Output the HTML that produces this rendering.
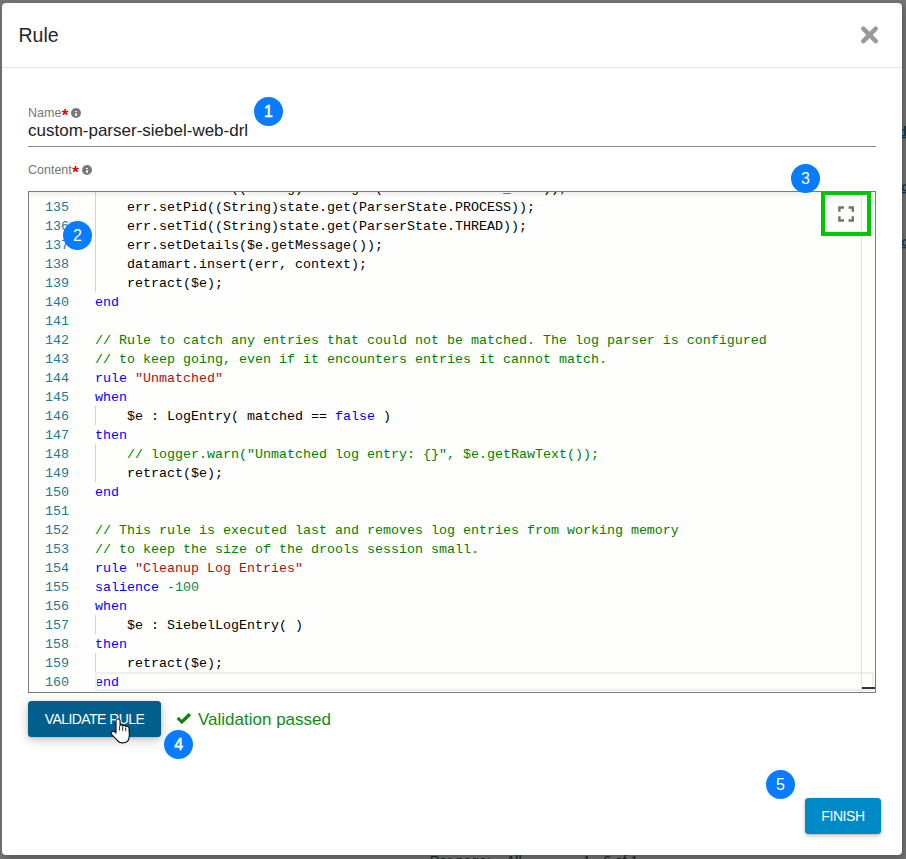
<!DOCTYPE html>
<html><head><meta charset="utf-8">
<style>
*{margin:0;padding:0;box-sizing:border-box}
html,body{width:906px;height:859px;overflow:hidden;background:#737373;font-family:"Liberation Sans",sans-serif}
.bgtxt{position:absolute;top:853px;font-size:14px;color:#222;white-space:pre}
.dlg{position:absolute;left:2px;top:3px;width:900px;height:852px;background:#fff;border-radius:4px;box-shadow:2px 3px 6px rgba(0,0,0,.25)}
.title{position:absolute;left:16.5px;top:19px;font-size:19.5px;color:#262626;line-height:26px}
.hsep{position:absolute;left:0;top:64px;width:900px;height:1px;background:#e3e3e3}
.close{position:absolute;left:0;top:0}
.lbl{position:absolute;font-size:12.5px;color:#777;line-height:14px;white-space:nowrap}
.lbl b{color:#e00;font-weight:bold;font-size:17px;vertical-align:-3.5px;margin-left:0.5px}
.info{position:absolute;width:10px;height:10px;border-radius:50%;background:#7a7a7a}
.info:before{content:"";position:absolute;left:4.3px;top:2.6px;width:1.5px;height:1.5px;background:#f4f4f4}
.info:after{content:"";position:absolute;left:4.2px;top:4.9px;width:1.6px;height:3px;background:#e6e6e6}
.val{position:absolute;left:26px;top:118px;font-size:17px;color:#222;line-height:20px;white-space:nowrap}
.uline{position:absolute;left:26px;top:143px;width:848px;height:1px;background:#8a8a8a}
.editor{position:absolute;left:26px;top:188px;width:848px;height:502px;border:1px solid #7a7a7a;background:#fefefd;overflow:hidden}
.code{position:absolute;left:0;top:1px;font-family:"Liberation Mono",monospace;font-size:13.333px;line-height:19px;white-space:pre;color:#000}
.ln{position:absolute;left:0;width:40px;text-align:right;color:#237893}
.tx{position:absolute;left:66px}
.k{color:#0000ff}.s{color:#a31515}.c{color:#008000}.n{color:#098658}
.guide{position:absolute;left:66px;width:1px;background:#d3d3d3}
.curline{position:absolute;left:66px;top:480px;width:779px;height:19px;border:2px solid #eeeeee}
.vsb{position:absolute;left:832px;top:0;width:1px;height:500px;background:#e0e0e0}
.ovr{position:absolute;left:833px;top:495px;width:14px;height:2px;background:#333}
.shadowtop{position:absolute;left:0;top:0;width:100%;height:6px;background:linear-gradient(rgba(0,0,0,.06),rgba(0,0,0,0))}
.badge{position:absolute;width:29.5px;height:29.5px;border-radius:50%;background:#077cff;color:#fff;font-size:16px;line-height:29.5px;text-align:center}
.btn{position:absolute;height:36px;border-radius:3.5px;color:#fff;font-size:14px;line-height:36px;text-align:center;box-shadow:0 3px 11px rgba(0,0,0,.22),0 1px 3px rgba(0,0,0,.14);letter-spacing:-0.4px}
.ok{position:absolute;left:196px;top:707px;font-size:17px;color:#138a13;line-height:20px;white-space:nowrap}
</style></head>
<body>
<div class="bgtxt" style="left:430px">Per page:</div><div class="bgtxt" style="left:506px">All</div>
<div class="bgtxt" style="left:583px">1 - 6 of 1</div>
<svg style="position:absolute;left:900px;top:110px" width="6" height="150"><g fill="#0b3d5f"><rect x="4.1" y="16" width="1.9" height="10"/><rect x="2" y="19.3" width="4" height="1.3"/><rect x="2" y="25" width="4" height="1.3"/><rect x="2" y="27" width="4" height="1.3"/><rect x="2" y="82" width="4" height="1.3"/><rect x="2" y="137" width="4" height="1.3"/></g><g fill="none" stroke="#0b3d5f" stroke-width="1.4"><path d="M7 75 H4.5 Q2.8 75 2.8 77 V78.5 Q2.8 80.5 4.5 80.5 H7"/><path d="M7 130 H4.5 Q2.8 130 2.8 132 V133.5 Q2.8 135.5 4.5 135.5 H7"/></g></svg>
<div class="bgtxt" style="left:672px;color:#555">&lsaquo;</div><div class="bgtxt" style="left:717px;color:#555">&rsaquo;</div>
<div class="dlg">
  <div class="title">Rule</div>
  <svg class="close" width="900" height="60"><g stroke="#9a9a9a" stroke-width="4.5" stroke-linecap="round"><line x1="861.3" y1="25.6" x2="873.8" y2="38.1"/><line x1="873.8" y1="25.6" x2="861.3" y2="38.1"/></g></svg>
  <div class="hsep"></div>

  <div class="lbl" style="left:26px;top:103px">Name<b>*</b></div>
  <div class="info" style="left:69px;top:105px"></div>
  <div class="val">custom-parser-siebel-web-drl</div>
  <div class="uline"></div>

  <div class="lbl" style="left:26px;top:160px">Content<b>*</b></div>
  <div class="info" style="left:80px;top:162px"></div>

  <div class="editor">
<div class="code">
<div class="ln" style="top:-14px">134</div><div class="tx" style="top:-14px">    err.setSource((String)state.get(ParserState.ERR_CODE));</div>
<div class="ln" style="top:5px">135</div><div class="tx" style="top:5px">    err.setPid((String)state.get(ParserState.PROCESS));</div>
<div class="ln" style="top:24px">136</div><div class="tx" style="top:24px">    err.setTid((String)state.get(ParserState.THREAD));</div>
<div class="ln" style="top:43px">137</div><div class="tx" style="top:43px">    err.setDetails($e.getMessage());</div>
<div class="ln" style="top:62px">138</div><div class="tx" style="top:62px">    datamart.insert(err, context);</div>
<div class="ln" style="top:81px">139</div><div class="tx" style="top:81px">    retract($e);</div>
<div class="ln" style="top:100px">140</div><div class="tx" style="top:100px"><span class="k">end</span></div>
<div class="ln" style="top:119px">141</div><div class="tx" style="top:119px"></div>
<div class="ln" style="top:138px">142</div><div class="tx" style="top:138px"><span class="c">// Rule to catch any entries that could not be matched. The log parser is configured</span></div>
<div class="ln" style="top:157px">143</div><div class="tx" style="top:157px"><span class="c">// to keep going, even if it encounters entries it cannot match.</span></div>
<div class="ln" style="top:176px">144</div><div class="tx" style="top:176px"><span class="k">rule</span> <span class="s">"Unmatched"</span></div>
<div class="ln" style="top:195px">145</div><div class="tx" style="top:195px"><span class="k">when</span></div>
<div class="ln" style="top:214px">146</div><div class="tx" style="top:214px">    $e : LogEntry( matched == <span class="k">false</span> )</div>
<div class="ln" style="top:233px">147</div><div class="tx" style="top:233px"><span class="k">then</span></div>
<div class="ln" style="top:252px">148</div><div class="tx" style="top:252px">    <span class="c">// logger.warn("Unmatched log entry: {}", $e.getRawText());</span></div>
<div class="ln" style="top:271px">149</div><div class="tx" style="top:271px">    retract($e);</div>
<div class="ln" style="top:290px">150</div><div class="tx" style="top:290px"><span class="k">end</span></div>
<div class="ln" style="top:309px">151</div><div class="tx" style="top:309px"></div>
<div class="ln" style="top:328px">152</div><div class="tx" style="top:328px"><span class="c">// This rule is executed last and removes log entries from working memory</span></div>
<div class="ln" style="top:347px">153</div><div class="tx" style="top:347px"><span class="c">// to keep the size of the drools session small.</span></div>
<div class="ln" style="top:366px">154</div><div class="tx" style="top:366px"><span class="k">rule</span> <span class="s">"Cleanup Log Entries"</span></div>
<div class="ln" style="top:385px">155</div><div class="tx" style="top:385px"><span class="k">salience</span> <span class="n">-100</span></div>
<div class="ln" style="top:404px">156</div><div class="tx" style="top:404px"><span class="k">when</span></div>
<div class="ln" style="top:423px">157</div><div class="tx" style="top:423px">    $e : SiebelLogEntry( )</div>
<div class="ln" style="top:442px">158</div><div class="tx" style="top:442px"><span class="k">then</span></div>
<div class="ln" style="top:461px">159</div><div class="tx" style="top:461px">    retract($e);</div>
<div class="ln" style="top:480px">160</div><div class="tx" style="top:480px"><span class="k">end</span></div>
</div>
<div class="guide" style="top:0px;height:100px"></div>
<div class="guide" style="top:214px;height:19px"></div>
<div class="guide" style="top:252px;height:38px"></div>
<div class="guide" style="top:423px;height:19px"></div>
<div class="guide" style="top:461px;height:19px"></div>
<div class="curline"></div>
<div class="vsb"></div>
<div class="ovr"></div>
<div class="shadowtop"></div>
  </div>

  <div class="btn" style="left:26px;top:698px;width:133px;background:#025f8b;letter-spacing:-0.55px">VALIDATE RULE</div>
  <svg style="position:absolute;left:170px;top:703px" width="24" height="24"><path d="M4.9 13.1 L6.6 10.9 L9.7 14.1 L16.6 7.1 L18.9 9.4 L9.8 18 Z" fill="#0b840b" stroke="#0b840b" stroke-width="0.4" stroke-linejoin="round"/></svg>
  <div class="ok">Validation passed</div>

  <div class="btn" style="left:803px;top:795px;width:76px;background:#0089c7;box-shadow:0 2px 5px rgba(0,0,0,.2),0 1px 2px rgba(0,0,0,.12)">FINISH</div>
</div>

<div style="position:absolute;left:821px;top:191px;width:50px;height:45px;border:4px solid #00c800"></div>
<svg style="position:absolute;left:836px;top:204px" width="20" height="20"><g fill="none" stroke="#727272" stroke-width="2.4"><path d="M3.4 7.7 V3.45 H8"/><path d="M12.6 3.45 H16.8 V7.7"/><path d="M3.4 12.3 V16.5 H8"/><path d="M12.6 16.5 H16.8 V12.3"/></g></svg>
<svg style="position:absolute;left:108px;top:717px" width="26" height="30" viewBox="0 0 26 30"><g stroke="#111" stroke-width="2.2" fill="#111"><rect x="8.6" y="2.6" width="2.9" height="16" rx="1.45"/><rect x="11.5" y="8.5" width="3.1" height="10" rx="1.5"/><rect x="14.6" y="9" width="3.1" height="10" rx="1.5"/><rect x="17.6" y="10" width="2.9" height="10" rx="1.45"/><path d="M8.6 15 L20.5 15 L20.5 20 Q20.5 25.3 14.5 25.3 Q11.3 25.3 9.3 22.5 L4.2 17.2 Q3.2 15.8 4.4 15.1 Q5.6 14.5 6.8 15.6 L8.6 17.4 Z"/></g><g fill="#fff"><rect x="8.6" y="2.6" width="2.9" height="16" rx="1.45"/><rect x="11.5" y="8.5" width="3.1" height="10" rx="1.5"/><rect x="14.6" y="9" width="3.1" height="10" rx="1.5"/><rect x="17.6" y="10" width="2.9" height="10" rx="1.45"/><path d="M8.6 15 L20.5 15 L20.5 20 Q20.5 25.3 14.5 25.3 Q11.3 25.3 9.3 22.5 L4.2 17.2 Q3.2 15.8 4.4 15.1 Q5.6 14.5 6.8 15.6 L8.6 17.4 Z"/></g><g stroke="#111" stroke-width="0.9"><path d="M11.6 9.5 V13"/><path d="M14.7 10 V13.5"/><path d="M17.7 11 V14"/></g></svg>
<div class="badge" style="left:253.75px;top:96.65px;-webkit-text-stroke:0.5px #fff">1</div>
<div class="badge" style="left:62.75px;top:220.55px">2</div>
<div class="badge" style="left:790.75px;top:163.65px">3</div>
<div class="badge" style="left:163.85px;top:729.75px;-webkit-text-stroke:0.5px #fff">4</div>
<div class="badge" style="left:765.75px;top:769.65px">5</div>
</body></html>
